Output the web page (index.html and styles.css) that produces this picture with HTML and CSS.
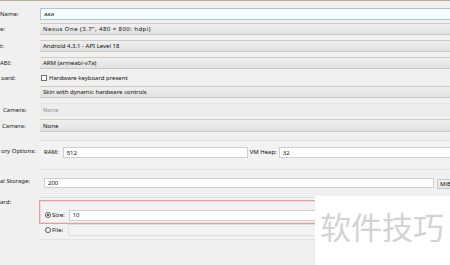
FILE: index.html
```html
<!DOCTYPE html>
<html>
<head>
<meta charset="utf-8">
<link rel="stylesheet" href="styles.css">
</head>
<body>
<div class="topbar"></div>
<div class="form">
  <div class="row r-name"><div class="lbl">Name:</div><div class="ctl"><div class="input focus">aaa</div></div></div>
  <div class="row r-dev"><div class="lbl">e:</div><div class="ctl"><div class="combo wide">Nexus One (3.7", 480 × 800: hdpi)</div></div></div>
  <div class="row r-tgt"><div class="lbl">t:</div><div class="ctl"><div class="combo">Android 4.3.1 - API Level 18</div></div></div>
  <div class="row r-cpu"><div class="lbl">ABI:</div><div class="ctl"><div class="combo">ARM (armeabi-v7a)</div></div></div>
  <div class="row r-kbd"><div class="lbl in1">oard:</div><div class="ctl check"><span class="box"></span><span>Hardware keyboard present</span></div></div>
  <div class="row r-skin"><div class="lbl"></div><div class="ctl"><div class="combo">Skin with dynamic hardware controls</div></div></div>
  <div class="row r-front"><div class="lbl in3">Camera:</div><div class="ctl"><div class="combo disabled">None</div></div></div>
  <div class="row r-back"><div class="lbl in2">Camera:</div><div class="ctl"><div class="combo">None</div></div></div>
  <div class="row r-mem"><div class="lbl top in1">ory Options:</div><div class="ctl group mem">
    <span class="tag">RAM:</span><div class="input white ram">512</div>
    <span class="tag vm">VM Heap:</span><div class="input white heap">32</div>
  </div></div>
  <div class="row r-int"><div class="lbl top">al Storage:</div><div class="ctl int">
    <div class="input white store">200</div><div class="combo mib">MiB</div>
  </div></div>
  <div class="row r-sd"><div class="lbl top">ard:</div><div class="ctl group sd">
    <div class="sizebox">
      <span class="radio on"></span><span class="tag">Size:</span><div class="input white size">10</div>
    </div>
    <div class="filerow">
      <span class="radio"></span><span class="tag">File:</span><div class="input dis file"></div>
    </div>
  </div></div>
</div>
<div class="watermark"><span>软件技巧</span></div>
</body>
</html>
```
FILE: styles.css
```css
html, body {
  margin: 0;
  padding: 0;
}
body {
  width: 450px;
  height: 265px;
  overflow: hidden;
  position: relative;
  background: #f0f0f0;
  font-family: "Noto Sans", "DejaVu Sans", sans-serif;
  font-size: 6px;
  color: #111;
}
.topbar {
  height: 1px;
  background: #bcae92;
}
.form {
  width: 520px;
}
.row {
  display: flex;
}
.lbl {
  width: 40px;
  flex: none;
  display: flex;
  align-items: center;
  white-space: nowrap;
  overflow: hidden;
  color: #1a1a1a;
}
.lbl.in1 { padding-left: 1px; width: 39px; }
.lbl.in2 { padding-left: 2px; width: 38px; }
.lbl.in3 { padding-left: 3px; width: 37px; }
.lbl.top {
  align-items: flex-start;
}
.ctl {
  flex: 1;
  display: flex;
  align-items: stretch;
  min-width: 0;
}
.input, .combo {
  box-sizing: border-box;
  flex: 1;
  display: flex;
  align-items: center;
  padding-left: 3px;
  white-space: nowrap;
}
.combo.wide {
  letter-spacing: 0.45px;
}
.input.focus {
  background: #f5ffff;
  border: 1px solid #aec6d0;
}
.combo {
  background: linear-gradient(#efefef, #e1e1e1);
  border-top: 1px solid #d2cbc4;
  border-bottom: 1px solid #c9c9c9;
}
.combo.disabled {
  background: #ededed;
  border-top: 1px solid #e0e0e0;
  border-bottom: 1px solid #e6e6e6;
  color: #8c8c8c;
}
.r-name { margin-top: 7px; height: 12px; }
.r-dev { margin-top: 3px; height: 12px; }
.r-tgt { margin-top: 5px; height: 12px; }
.r-cpu { margin-top: 5px; height: 12px; }
.r-kbd { margin-top: 2px; height: 13px; }
.r-skin { margin-top: 2px; height: 12px; }
.r-front { margin-top: 5px; height: 13px; }
.r-back { margin-top: 3px; height: 13px; }
.check {
  align-items: center;
  gap: 2px;
  padding-left: 1px;
}
.box {
  width: 6px;
  height: 6px;
  box-sizing: border-box;
  border: 1px solid #6e6e6e;
  background: #fff;
  flex: none;
}
.r-mem { margin-top: 8px; height: 30px; }
.r-mem .lbl { padding-top: 7px; height: 9px; line-height: 9px; }
.group {
  background: #f2f2f2;
  border-top: 1px solid #e3e3e3;
  border-bottom: 1px solid #e3e3e3;
  box-sizing: border-box;
}
.mem {
  align-items: flex-start;
  padding: 6px 0 0 4px;
}
.tag {
  height: 11px;
  line-height: 11px;
  flex: none;
}
.input.white {
  background: #fff;
  border: 1px solid #cfcfcf;
  height: 11px;
  flex: none;
}
.ram { width: 185px; margin-left: 4px; }
.vm { margin-left: 2px; }
.heap { width: 180px; margin-left: 2px; }
.r-int { margin-top: 8px; height: 11px; }
.r-int .lbl { padding-top: 0; line-height: 7px; }
.int {
  padding-left: 4px;
  gap: 3px;
}
.store { width: 390px; height: 10px !important; }
.mib {
  flex: none;
  width: 20px;
  height: 10px;
  margin-top: 1px;
  padding-left: 2px;
  border: 1px solid #c9c9c9;
  background: linear-gradient(#f3f3f3, #e3e3e3);
}
.r-sd { margin-top: 8px; height: 43px; }
.r-sd .lbl { padding-top: 2px; line-height: 7px; }
.sd {
  flex-direction: column;
  align-items: stretch;
  padding-top: 2px;
}
.sizebox {
  display: flex;
  align-items: center;
  box-sizing: border-box;
  height: 24px;
  margin-left: -1px;
  padding: 8px 0 2px 5px;
  border: 1px solid #dca2a2;
  box-shadow: inset 0 0 0 1px #f2d8d8;
}
.radio {
  width: 6px;
  height: 6px;
  box-sizing: border-box;
  border: 1px solid #5a5a5a;
  border-radius: 50%;
  background: #fff;
  flex: none;
  position: relative;
  margin-right: 1px;
}
.radio.on::after {
  content: "";
  position: absolute;
  left: 1px;
  top: 1px;
  width: 2px;
  height: 2px;
  border-radius: 50%;
  background: #222;
}
.size { flex: 1 !important; margin-left: 4px; }
.filerow {
  display: flex;
  align-items: center;
  height: 12px;
  padding-left: 5px;
}
.input.dis {
  background: #f3f3f3;
  border: 1px solid #e0e0e0;
  height: 12px;
  margin-left: 5px;
}
.watermark {
  position: absolute;
  left: 315px;
  top: 196px;
  right: 0;
  bottom: 0;
  background: #fff;
  padding: 12px 0 0 5px;
  font-family: "Noto Sans CJK SC", sans-serif;
  font-size: 31px;
  line-height: 36px;
  color: #d3d3d3;
  white-space: nowrap;
}
```
